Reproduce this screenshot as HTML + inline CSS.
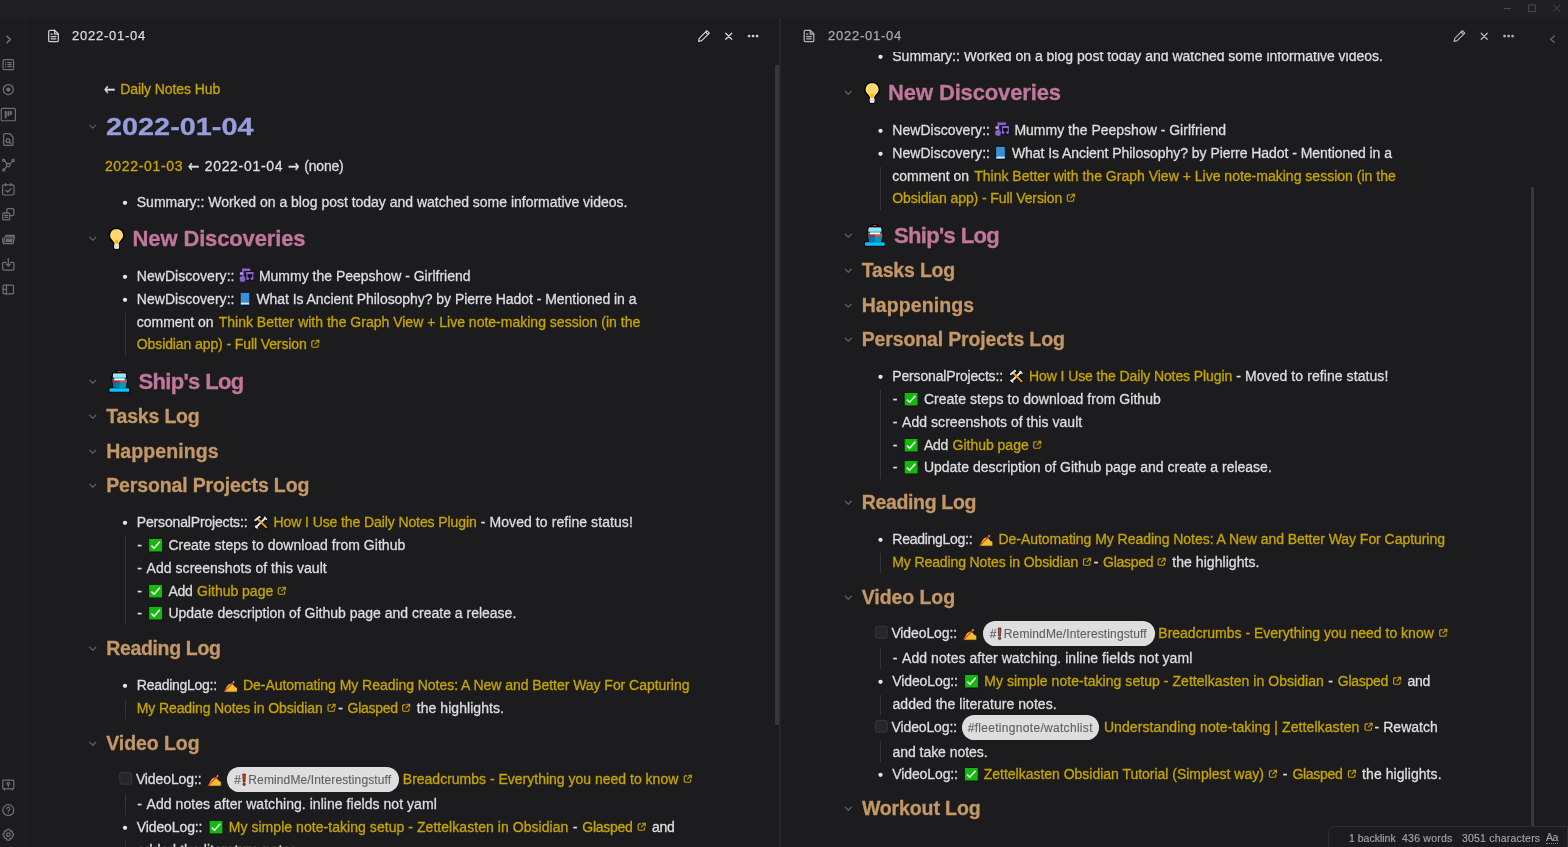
<!DOCTYPE html>
<html lang="en"><head><meta charset="utf-8"><title>2022-01-04 - Obsidian</title>
<style>
html,body{margin:0;padding:0}
body{width:1568px;height:847px;overflow:hidden;background:#1c1c1f;position:relative;font-family:"Liberation Sans", sans-serif;font-size:14px;color:#dedede}
.ln{margin:0;padding:0;font-size:14px;font-weight:400}
.t{position:absolute;white-space:pre;line-height:16px;-webkit-text-stroke:.3px}
.bul{position:absolute;width:4.200px;height:4.200px;border-radius:50%;background:#e4e4e4}
.gd{position:absolute;width:1px;background:#323237}
.pill{position:absolute;height:24.600px;border-radius:12.300px;background:#dedede}
.clip{position:absolute;top:52px;height:795px;overflow:hidden}
.clip>.in{position:absolute;left:0;top:-52px;will-change:transform}
#titlebar{position:absolute;left:0;top:0;width:1568px;height:18px;background:#202024}
.hd{position:absolute;font-size:13px;line-height:20px;white-space:pre;will-change:transform;-webkit-text-stroke:.25px}
#status{position:absolute;left:1328px;top:826px;width:240px;height:22px;box-sizing:border-box;border:1px solid #2c2c31;border-radius:6px 0 0 0;background:#1c1c1f;font-size:10.500px;color:#a4a4a8}
#status span{position:absolute;top:5px;line-height:12px;white-space:pre;will-change:transform;-webkit-text-stroke:.15px}
</style></head>
<body>
<div id="titlebar">
<svg style="position:absolute;left:1503px;top:4px" width="58" height="9" viewBox="0 0 58 9" fill="none" stroke="#4b4b52" stroke-width="1"><path d="M1 4.500h7"/><rect x="25.800" y="1" width="6.600" height="6.600"/><path d="M50.400 1l6.600 6.600M57 1l-6.600 6.600"/></svg>
</div>
<div id="ribbon" style="position:absolute;left:0;top:18px;width:24.500px;height:829px;border-right:1px solid #232327"></div>
<svg style="position:absolute;left:2px;top:34px" width="12" height="11" viewBox="0 0 12 11" ><g transform="translate(0.80 0.00) scale(0.4583 0.4583) translate(-0.00 -0.00)"><g fill="none" stroke="#7a7a80" stroke-width="3.05" stroke-linecap="round" stroke-linejoin="round"><path d="M9 5l7.5 7L9 19"/></g></g></svg><svg style="position:absolute;left:2px;top:58px" width="13" height="13" viewBox="0 0 13 13" ><g transform="translate(0.30 0.70) scale(0.5000 0.5000) translate(-0.00 -0.00)"><g fill="none" stroke="#6f6f75" stroke-width="2.50" stroke-linecap="round" stroke-linejoin="round"><rect x="1.500" y="2" width="21" height="20" rx="2.500"/><path d="M6.500 8h.1M6.500 12h.1M6.500 16h.1M11 8h7M11 12h7M11 16h7"/></g></g></svg><svg style="position:absolute;left:2px;top:83px" width="13" height="13" viewBox="0 0 13 13" ><g transform="translate(0.30 0.60) scale(0.5000 0.5000) translate(-0.00 -0.00)"><g fill="none" stroke="#6f6f75" stroke-width="2.50" stroke-linecap="round" stroke-linejoin="round"><circle cx="12" cy="12" r="10"/><circle cx="12" cy="12" r="4.2" fill="#6f6f75" stroke="none"/></g></g></svg><svg style="position:absolute;left:0px;top:106px" width="17" height="17" viewBox="0 0 17 17" ><g transform="translate(0.55 0.85) scale(0.6458 0.6458) translate(-0.00 -0.00)"><g fill="none" stroke="#6f6f75" stroke-width="1.86" stroke-linecap="round" stroke-linejoin="round"><rect x="1" y="2.500" width="22" height="19" rx="2"/><path d="M8 7.500v9M12.200 7.500v5.500M16 7.500v4" stroke-width="3"/></g></g></svg><svg style="position:absolute;left:0px;top:132px" width="16" height="15" viewBox="0 0 16 15" ><g transform="translate(0.80 0.00) scale(0.6250 0.6250) translate(-0.00 -0.00)"><g fill="none" stroke="#6f6f75" stroke-width="2.00" stroke-linecap="round" stroke-linejoin="round"><path d="M14 2.500H6.500a2 2 0 0 0-2 2v15a2 2 0 0 0 2 2h11a2 2 0 0 0 2-2V8z"/><circle cx="11.500" cy="14" r="3"/><path d="M13.800 16.300l2.200 2.200"/></g></g></svg><svg style="position:absolute;left:1px;top:157px" width="15" height="15" viewBox="0 0 15 15" ><g transform="translate(0.00 0.20) scale(0.6083 0.6083) translate(-0.00 -0.00)"><g fill="none" stroke="#6f6f75" stroke-width="2.05" stroke-linecap="round" stroke-linejoin="round"><circle cx="12" cy="13" r="3"/><circle cx="4.500" cy="5" r="1.800"/><circle cx="20" cy="5.500" r="1.800"/><circle cx="4.500" cy="21" r="1.800"/><path d="M9.800 10.800L5.800 6.400M14.400 11L18.800 6.800M9.800 15.200L5.700 19.700"/></g></g></svg><svg style="position:absolute;left:1px;top:182px" width="15" height="15" viewBox="0 0 15 15" ><g transform="translate(0.10 0.10) scale(0.6000 0.6000) translate(-0.00 -0.00)"><g fill="none" stroke="#6f6f75" stroke-width="2.08" stroke-linecap="round" stroke-linejoin="round"><rect x="2.500" y="4.500" width="19" height="17" rx="2"/><path d="M7.500 2v4M16.500 2v4M8 13.500l3 3 5.500-5.500"/></g></g></svg><svg style="position:absolute;left:1px;top:207px" width="14" height="15" viewBox="0 0 14 15" ><g transform="translate(0.60 0.60) scale(0.5583 0.5583) translate(-0.00 -0.00)"><g fill="none" stroke="#6f6f75" stroke-width="2.24" stroke-linecap="round" stroke-linejoin="round"><rect x="9.500" y="2" width="12.500" height="12.500" rx="2"/><rect x="2" y="9.500" width="12.500" height="12.500" rx="2" fill="#1c1c1f"/><path d="M5.500 14h5.500M5.500 17.500h5.500"/></g></g></svg><svg style="position:absolute;left:1px;top:232px" width="15" height="15" viewBox="0 0 15 15" ><g transform="translate(0.85 0.75) scale(0.5625 0.5625) translate(-0.00 -0.00)"><g fill="none" stroke="#6f6f75" stroke-width="2.22" stroke-linecap="round" stroke-linejoin="round"><path d="M7 4.500h15l-1 3"/><path d="M5.500 7.500h17l-2.500 12H3z"/><path d="M8.500 11.500h10l-1 4.500h-10z" fill="#6f6f75"/><path d="M1.500 9v8"/></g></g></svg><svg style="position:absolute;left:1px;top:257px" width="15" height="15" viewBox="0 0 15 15" ><g transform="translate(0.20 0.10) scale(0.5917 0.5917) translate(-0.00 -0.00)"><g fill="none" stroke="#6f6f75" stroke-width="2.11" stroke-linecap="round" stroke-linejoin="round"><path d="M12 2v13M8.500 11.500L12 15l3.500-3.500"/><path d="M8 9H4.500a2 2 0 0 0-2 2v9a2 2 0 0 0 2 2h15a2 2 0 0 0 2-2v-9a2 2 0 0 0-2-2H16"/></g></g></svg><svg style="position:absolute;left:2px;top:283px" width="13" height="13" viewBox="0 0 13 13" ><g transform="translate(0.05 0.25) scale(0.5208 0.5208) translate(-0.00 -0.00)"><g fill="none" stroke="#6f6f75" stroke-width="2.40" stroke-linecap="round" stroke-linejoin="round"><rect x="2" y="3.500" width="20" height="17" rx="2"/><path d="M8.500 3.500v17M2 12h6.500"/></g></g></svg><svg style="position:absolute;left:2px;top:778px" width="13" height="14" viewBox="0 0 13 14" ><g transform="translate(0.05 0.55) scale(0.5208 0.5208) translate(-0.00 -0.00)"><g fill="none" stroke="#6f6f75" stroke-width="2.40" stroke-linecap="round" stroke-linejoin="round"><rect x="1.500" y="3" width="21" height="17" rx="1.500"/><circle cx="12" cy="9.500" r="2.300"/><path d="M12 12v4M4.500 20v2M19.500 20v2"/></g></g></svg><svg style="position:absolute;left:2px;top:803px" width="13" height="14" viewBox="0 0 13 14" ><g transform="translate(0.05 0.95) scale(0.5208 0.5208) translate(-0.00 -0.00)"><g fill="none" stroke="#6f6f75" stroke-width="2.40" stroke-linecap="round" stroke-linejoin="round"><circle cx="12" cy="12" r="10.500"/><path d="M9 9.300a3 3 0 1 1 4.300 2.700c-.9.500-1.300 1-1.300 2.200M12 17.600h.01"/></g></g></svg><svg style="position:absolute;left:1px;top:828px" width="14" height="14" viewBox="0 0 14 14" ><g transform="translate(0.80 0.20) scale(0.5417 0.5417) translate(-0.00 -0.00)"><g fill="none" stroke="#6f6f75" stroke-width="2.31" stroke-linecap="round" stroke-linejoin="round"><circle cx="12" cy="12" r="3.300"/><path d="M12 1.500l2.400 1 .8 2.600 2.500-.4 1.800 1.800-.4 2.500 2.400 1.400v3.200l-2.400 1.400.4 2.500-1.800 1.800-2.500-.4-.8 2.600-2.400 1-2.400-1-.8-2.600-2.500.4-1.800-1.800.4-2.500L2.500 13.600v-3.200l2.400-1.400-.4-2.500 1.800-1.800 2.500.4.800-2.600z"/></g></g></svg>
<div id="lhead"><svg style="position:absolute;left:47px;top:29px" width="13" height="14" viewBox="0 0 13 14" ><g transform="translate(0.80 0.50) scale(1.0000 1.0000) translate(-0.00 -0.00)"><g fill="none" stroke="#d0d0d0" stroke-width="1.25" stroke-linejoin="round" stroke-linecap="round"><path d="M6.800 .800H2.200A1.300 1.300 0 0 0 .900 2.100v8.800a1.300 1.300 0 0 0 1.300 1.300h7a1.300 1.300 0 0 0 1.300-1.300V4.500z"/><path d="M6.800 .800v3.700h3.700"/><path d="M3.300 7h4.800M3.300 9.300h4.800M3.300 4.700h1.200"/></g></g></svg><svg style="position:absolute;left:697px;top:29px" width="14" height="14" viewBox="0 0 14 14" ><g transform="translate(0.60 0.40) scale(1.0000 1.0000) translate(-0.00 -0.00)"><g fill="none" stroke="#d0d0d0" stroke-width="1.2" stroke-linejoin="round" stroke-linecap="round"><path d="M9.300 1.300l2.400 2.400-7.600 7.600-3.100.700.700-3.100z"/><path d="M8 2.600l2.400 2.400"/></g></g></svg><svg style="position:absolute;left:724px;top:32px" width="9" height="9" viewBox="0 0 9 9" ><g transform="translate(0.70 0.20) scale(1.0000 1.0000) translate(-0.00 -0.00)"><g fill="none" stroke="#d0d0d0" stroke-width="1.35" stroke-linejoin="round" stroke-linecap="round"><path d="M1 1L7 7M7 1L1 7"/></g></g></svg><svg style="position:absolute;left:747px;top:34px" width="12" height="4" viewBox="0 0 12 4" ><g transform="translate(0.60 0.60) scale(1.0000 1.0000) translate(-0.00 -0.00)"><circle cx="1.5" cy="1.5" r="1.4" fill="#d0d0d0"/><circle cx="5.5" cy="1.5" r="1.4" fill="#d0d0d0"/><circle cx="9.5" cy="1.5" r="1.4" fill="#d0d0d0"/></g></svg><span class="hd" style="left:72.300px;top:25.800px;color:#dcdcdc;letter-spacing:0.750px">2022-01-04</span></div>
<div id="rhead"><svg style="position:absolute;left:803px;top:29px" width="12" height="14" viewBox="0 0 12 14" ><g transform="translate(0.30 0.50) scale(1.0000 1.0000) translate(-0.00 -0.00)"><g fill="none" stroke="#b4b4b8" stroke-width="1.25" stroke-linejoin="round" stroke-linecap="round"><path d="M6.800 .800H2.200A1.300 1.300 0 0 0 .900 2.100v8.800a1.300 1.300 0 0 0 1.300 1.300h7a1.300 1.300 0 0 0 1.300-1.300V4.500z"/><path d="M6.800 .800v3.700h3.700"/><path d="M3.300 7h4.800M3.300 9.300h4.800M3.300 4.700h1.200"/></g></g></svg><svg style="position:absolute;left:1453px;top:29px" width="14" height="14" viewBox="0 0 14 14" ><g transform="translate(0.10 0.40) scale(1.0000 1.0000) translate(-0.00 -0.00)"><g fill="none" stroke="#b4b4b8" stroke-width="1.2" stroke-linejoin="round" stroke-linecap="round"><path d="M9.300 1.300l2.400 2.400-7.600 7.600-3.100.700.700-3.100z"/><path d="M8 2.600l2.400 2.400"/></g></g></svg><svg style="position:absolute;left:1480px;top:32px" width="9" height="9" viewBox="0 0 9 9" ><g transform="translate(0.20 0.20) scale(1.0000 1.0000) translate(-0.00 -0.00)"><g fill="none" stroke="#b4b4b8" stroke-width="1.35" stroke-linejoin="round" stroke-linecap="round"><path d="M1 1L7 7M7 1L1 7"/></g></g></svg><svg style="position:absolute;left:1503px;top:34px" width="12" height="4" viewBox="0 0 12 4" ><g transform="translate(0.10 0.60) scale(1.0000 1.0000) translate(-0.00 -0.00)"><circle cx="1.5" cy="1.5" r="1.4" fill="#b4b4b8"/><circle cx="5.5" cy="1.5" r="1.4" fill="#b4b4b8"/><circle cx="9.5" cy="1.5" r="1.4" fill="#b4b4b8"/></g></svg><span class="hd" style="left:827.80px;top:25.800px;color:#a9a9ad;letter-spacing:0.750px">2022-01-04</span></div>
<div class="clip" style="left:25px;width:755px"><div class="in" style="left:-25px">
<div class="ln"><span class="t" style='left:104.30px;top:79px;line-height:20px;font-family:"DejaVu Sans", sans-serif;font-size:17px;transform:scaleX(.8);transform-origin:0 0;'>←</span><span class="t" style="left:120.30px;top:81px;color:#c6a500;letter-spacing:-0.084px;">Daily Notes Hub</span></div>
<h1 class="ln"><svg style="position:absolute;left:88px;top:123px" width="9" height="7" viewBox="0 0 9 7" ><g transform="translate(0.80 0.90) scale(1.0000 1.0000) translate(-0.00 -0.00)"><path d="M1 1.2l3 3 3-3" fill="none" stroke="#5a5a60" stroke-width="1.3" stroke-linecap="round" stroke-linejoin="round"/></g></svg><span class="t" style="left:106.20px;top:113px;line-height:27px;color:#969ddd;font-size:24px;font-weight:700;transform:scaleX(1.2015);transform-origin:0 0;">2022-01-04</span></h1>
<div class="ln"><span class="t" style="left:104.90px;top:158px;color:#c6a500;letter-spacing:0.678px;">2022-01-03</span><span class="t" style='left:188.40px;top:156px;line-height:20px;font-family:"DejaVu Sans", sans-serif;font-size:17px;transform:scaleX(.8);transform-origin:0 0;'>←</span><span class="t" style="left:204.70px;top:158px;letter-spacing:0.688px;">2022-01-04</span><span class="t" style='left:287.90px;top:156px;line-height:20px;font-family:"DejaVu Sans", sans-serif;font-size:17px;transform:scaleX(.8);transform-origin:0 0;'>→</span><span class="t" style="left:304.20px;top:158px;letter-spacing:-0.178px;">(none)</span></div>
<div class="ln"><svg style="position:absolute;left:122px;top:200px" width="6" height="6" viewBox="0 0 6 6" ><g transform="translate(0.70 0.50) scale(1.0000 1.0000) translate(-0.00 -0.00)"><circle cx="2.3" cy="2.3" r="2.15" fill="#e6e6e6"/></g></svg><span class="t" style="left:136.80px;top:194px;letter-spacing:-0.013px;">Summary:: Worked on a blog post today and watched some informative videos.</span></div>
<h2 class="ln"><svg style="position:absolute;left:88px;top:236px" width="9" height="6" viewBox="0 0 9 6" ><g transform="translate(0.80 0.10) scale(1.0000 1.0000) translate(-0.00 -0.00)"><path d="M1 1.2l3 3 3-3" fill="none" stroke="#5a5a60" stroke-width="1.3" stroke-linecap="round" stroke-linejoin="round"/></g></svg><svg style="position:absolute;left:108px;top:227px" width="18" height="24" viewBox="0 0 18 24" role="img" aria-label="💡"><g transform="translate(0.10 0.00) scale(1.0353 1.0348) translate(-0.00 -0.00)"><path d="M8.2 1.3a6.9 6.9 0 0 0-4 12.5c1 .9 1.4 1.9 1.5 3.2v3.2a1.4 1.4 0 0 0 1.4 1.4h2.2a1.4 1.4 0 0 0 1.4-1.4V17c.1-1.3.5-2.3 1.5-3.2a6.9 6.9 0 0 0-4-12.5z" fill="#ffd872" stroke="#000" stroke-width="1.3"/><path d="M6.3 12.3h3.8l-.5 4H6.8z" fill="#fdb800"/><rect x="5.9" y="16.4" width="4.7" height="4.6" rx="1" fill="#e9e9e9"/><rect x="5.9" y="18" width="4.7" height=".7" fill="#cfcfcf"/></g></svg><span class="t" style="left:132.60px;top:226px;line-height:25px;color:#c0779a;font-size:22px;font-weight:700;letter-spacing:-0.138px;">New Discoveries</span></h2>
<div class="ln"><svg style="position:absolute;left:122px;top:274px" width="6" height="6" viewBox="0 0 6 6" ><g transform="translate(0.70 0.50) scale(1.0000 1.0000) translate(-0.00 -0.00)"><circle cx="2.3" cy="2.3" r="2.15" fill="#e6e6e6"/></g></svg><span class="t" style="left:136.80px;top:268px;letter-spacing:0.032px;">NewDiscovery::</span><svg style="position:absolute;left:239px;top:268px" width="15" height="15" viewBox="0 0 15 15" role="img" aria-label="🎶"><g transform="translate(0.50 0.00) scale(1.0000 1.0000) translate(-0.00 -0.00)"><g stroke="#0b0b0d" stroke-width="1.4" stroke-linejoin="round" fill="#0b0b0d"><rect x="6.9" y="4" width="7" height="6.6"/><circle cx="8.1" cy="10.5" r="1.5"/><circle cx="12.5" cy="10.5" r="1.5"/></g><g fill="#8762cb"><rect x="2.7" y=".5" width="8.1" height="2.5"/><rect x="2.7" y=".5" width="1.5" height="10.5"/><circle cx="3" cy="10.9" r="2.9"/><rect x="6.9" y="4" width="7" height="2.1"/><rect x="6.9" y="4" width="1.2" height="6.3"/><rect x="12.7" y="4" width="1.2" height="6.3"/><circle cx="8.1" cy="10.5" r="1.5"/><circle cx="12.5" cy="10.5" r="1.5"/></g><circle cx="1.9" cy="5.5" r="1.6" fill="#b59bee"/></g></svg><span class="t" style="left:258.90px;top:268px;">Mummy the Peepshow - Girlfriend</span></div>
<div class="ln"><svg style="position:absolute;left:122px;top:297px" width="6" height="6" viewBox="0 0 6 6" ><g transform="translate(0.70 0.50) scale(1.0000 1.0000) translate(-0.00 -0.00)"><circle cx="2.3" cy="2.3" r="2.15" fill="#e6e6e6"/></g></svg><span class="t" style="left:136.80px;top:291px;letter-spacing:0.032px;">NewDiscovery::</span><svg style="position:absolute;left:239px;top:291px" width="13" height="16" viewBox="0 0 13 16" role="img" aria-label="📘"><g transform="translate(0.70 0.80) scale(1.0000 1.0000) translate(-0.00 -0.00)"><rect x=".45" y=".5" width="9.7" height="13.2" rx="1.2" fill="#3a8fd0" stroke="#0a0a0c" stroke-width=".9"/><rect x="1.2" y="10.9" width="8.2" height="1.5" fill="#dfe9f2"/></g></svg><span class="t" style="left:256.40px;top:291px;letter-spacing:-0.048px;">What Is Ancient Philosophy? by Pierre Hadot - Mentioned in a</span></div>
<div class="ln"><span class="t" style="left:136.80px;top:314px;letter-spacing:-0.035px;">comment on</span><span class="t" style="left:218.70px;top:314px;color:#c6a500;letter-spacing:0.006px;">Think Better with the Graph View + Live note-making session (in the</span></div>
<div class="ln"><span class="t" style="left:136.80px;top:336px;color:#c6a500;letter-spacing:-0.102px;">Obsidian app) - Full Version</span><svg style="position:absolute;left:311px;top:339px" width="9" height="10" viewBox="0 0 9 10" ><g transform="translate(0.00 0.60) scale(0.9239 0.9239) translate(-0.00 -0.00)"><g fill="none" stroke="#c6a500" stroke-width="1.2" stroke-linecap="round" stroke-linejoin="round"><path d="M3.6 1.4H1.9a1 1 0 0 0-1 1v4.9a1 1 0 0 0 1 1h4.9a1 1 0 0 0 1-1V5.6"/><path d="M5.6 0.7H8.5V3.6"/><path d="M8.3 0.9L4.4 4.8"/></g></g></svg></div>
<h2 class="ln"><svg style="position:absolute;left:88px;top:379px" width="9" height="6" viewBox="0 0 9 6" ><g transform="translate(0.80 0.10) scale(1.0000 1.0000) translate(-0.00 -0.00)"><path d="M1 1.2l3 3 3-3" fill="none" stroke="#5a5a60" stroke-width="1.3" stroke-linecap="round" stroke-linejoin="round"/></g></svg><svg style="position:absolute;left:108px;top:369px" width="23" height="24" viewBox="0 0 23 24" role="img" aria-label="🚢"><g transform="translate(0.30 0.40) scale(1.0000 1.0000) translate(-0.00 -0.00)"><g stroke="#000" stroke-width="1.2" stroke-linejoin="round"><rect x="8.4" y="1.2" width="5" height="2.2" fill="#e2557a"/><path d="M4.5 3.6h13.2l.8 5.2H3.7z" fill="#fff"/><path d="M3.2 8.6h16.2l-2 10H5.2z" fill="#0a8fb8"/><rect x=".8" y="18.6" width="20.4" height="4" fill="#05c4ff"/></g><rect x="5" y="4.8" width="12.4" height="3.6" fill="#7fe9ff"/><rect x="6" y="8.9" width="10.4" height="2.2" fill="#f4f4f4"/><rect x="3.9" y="11.3" width="7.4" height="2" fill="#d1122f"/><rect x="11.3" y="11.3" width="7.4" height="2" fill="#e0522a"/><path d="M4.3 13.3h7v5.2H5.3z" fill="#0078a4"/><path d="M11.3 13.3h7l-1 5.2h-6z" fill="#0099c2"/><rect x="1.3" y="19.1" width="19.4" height="3" fill="#05c4ff"/></g></svg><span class="t" style="left:138.40px;top:369px;line-height:25px;color:#c0779a;font-size:22px;font-weight:700;letter-spacing:-0.636px;">Ship&#x27;s Log</span></h2>
<h3 class="ln"><svg style="position:absolute;left:88px;top:414px" width="9" height="6" viewBox="0 0 9 6" ><g transform="translate(0.80 0.10) scale(1.0000 1.0000) translate(-0.00 -0.00)"><path d="M1 1.2l3 3 3-3" fill="none" stroke="#5a5a60" stroke-width="1.3" stroke-linecap="round" stroke-linejoin="round"/></g></svg><span class="t" style="left:106.20px;top:405px;line-height:22px;color:#c49866;font-size:19.5px;font-weight:700;letter-spacing:-0.178px;">Tasks Log</span></h3>
<h3 class="ln"><svg style="position:absolute;left:88px;top:449px" width="9" height="6" viewBox="0 0 9 6" ><g transform="translate(0.80 0.10) scale(1.0000 1.0000) translate(-0.00 -0.00)"><path d="M1 1.2l3 3 3-3" fill="none" stroke="#5a5a60" stroke-width="1.3" stroke-linecap="round" stroke-linejoin="round"/></g></svg><span class="t" style="left:106.20px;top:440px;line-height:22px;color:#c49866;font-size:19.5px;font-weight:700;letter-spacing:0.091px;">Happenings</span></h3>
<h3 class="ln"><svg style="position:absolute;left:88px;top:483px" width="9" height="6" viewBox="0 0 9 6" ><g transform="translate(0.80 0.10) scale(1.0000 1.0000) translate(-0.00 -0.00)"><path d="M1 1.2l3 3 3-3" fill="none" stroke="#5a5a60" stroke-width="1.3" stroke-linecap="round" stroke-linejoin="round"/></g></svg><span class="t" style="left:106.20px;top:474px;line-height:22px;color:#c49866;font-size:19.5px;font-weight:700;letter-spacing:-0.138px;">Personal Projects Log</span></h3>
<div class="ln"><svg style="position:absolute;left:122px;top:520px" width="6" height="6" viewBox="0 0 6 6" ><g transform="translate(0.70 0.50) scale(1.0000 1.0000) translate(-0.00 -0.00)"><circle cx="2.3" cy="2.3" r="2.15" fill="#e6e6e6"/></g></svg><span class="t" style="left:136.80px;top:514px;letter-spacing:-0.167px;">PersonalProjects::</span><svg style="position:absolute;left:254px;top:515px" width="14" height="15" viewBox="0 0 14 15" role="img" aria-label="🛠"><g transform="translate(0.00 0.20) scale(1.0000 1.0000) translate(-0.00 -0.00)"><g stroke-linecap="round"><path d="M2.2 11.8L11.2 3" stroke="#000" stroke-width="3.6"/><path d="M3.6 3.6L12.2 12.2" stroke="#000" stroke-width="3.6"/><path d="M1.2 5.2L5.6 1.4" stroke="#000" stroke-width="3.6"/><path d="M2.2 11.8L11.2 3" stroke="#e8e8e8" stroke-width="2"/><path d="M1.6 11.2l1.6 1.6M10.6 2.2l1.8 1.8" stroke="#e8e8e8" stroke-width="1.6"/><path d="M4 4L12.2 12.2" stroke="#e8a200" stroke-width="2"/><path d="M1.4 5L5.6 1.6" stroke="#d9d9d9" stroke-width="2.2"/></g></g></svg><span class="t" style="left:273.60px;top:514px;color:#c6a500;letter-spacing:-0.100px;">How I Use the Daily Notes Plugin</span><span class="t" style="left:480.80px;top:514px;letter-spacing:0.076px;">- Moved to refine status!</span></div>
<div class="ln"><span class="t" style="left:137.20px;top:537px;letter-spacing:0.328px;">-</span><svg style="position:absolute;left:148px;top:538px" width="16" height="15" viewBox="0 0 16 15" role="img" aria-label="✅"><g transform="translate(0.20 0.00) scale(1.0000 1.0000) translate(-0.00 -0.00)"><rect x=".45" y=".45" width="13.9" height="13.5" rx=".8" fill="#16b810" stroke="#0a0d0a" stroke-width=".9"/><path d="M3.2 7.6l2.7 2.6 5.7-6.4" fill="none" stroke="#f4fff4" stroke-width="1.55"/></g></svg><span class="t" style="left:168.40px;top:537px;letter-spacing:0.031px;">Create steps to download from Github</span></div>
<div class="ln"><span class="t" style="left:137.20px;top:560px;letter-spacing:0.328px;">-</span><span class="t" style="left:146.60px;top:560px;letter-spacing:0.041px;">Add screenshots of this vault</span></div>
<div class="ln"><span class="t" style="left:137.20px;top:583px;letter-spacing:0.328px;">-</span><svg style="position:absolute;left:148px;top:584px" width="16" height="15" viewBox="0 0 16 15" role="img" aria-label="✅"><g transform="translate(0.20 0.00) scale(1.0000 1.0000) translate(-0.00 -0.00)"><rect x=".45" y=".45" width="13.9" height="13.5" rx=".8" fill="#16b810" stroke="#0a0d0a" stroke-width=".9"/><path d="M3.2 7.6l2.7 2.6 5.7-6.4" fill="none" stroke="#f4fff4" stroke-width="1.55"/></g></svg><span class="t" style="left:168.40px;top:583px;letter-spacing:-0.274px;">Add</span><span class="t" style="left:197.10px;top:583px;color:#c6a500;letter-spacing:-0.018px;">Github page</span><svg style="position:absolute;left:277px;top:586px" width="9" height="10" viewBox="0 0 9 10" ><g transform="translate(0.40 0.60) scale(0.9239 0.9239) translate(-0.00 -0.00)"><g fill="none" stroke="#c6a500" stroke-width="1.2" stroke-linecap="round" stroke-linejoin="round"><path d="M3.6 1.4H1.9a1 1 0 0 0-1 1v4.9a1 1 0 0 0 1 1h4.9a1 1 0 0 0 1-1V5.6"/><path d="M5.6 0.7H8.5V3.6"/><path d="M8.3 0.9L4.4 4.8"/></g></g></svg></div>
<div class="ln"><span class="t" style="left:137.20px;top:605px;letter-spacing:0.328px;">-</span><svg style="position:absolute;left:148px;top:606px" width="16" height="15" viewBox="0 0 16 15" role="img" aria-label="✅"><g transform="translate(0.20 0.00) scale(1.0000 1.0000) translate(-0.00 -0.00)"><rect x=".45" y=".45" width="13.9" height="13.5" rx=".8" fill="#16b810" stroke="#0a0d0a" stroke-width=".9"/><path d="M3.2 7.6l2.7 2.6 5.7-6.4" fill="none" stroke="#f4fff4" stroke-width="1.55"/></g></svg><span class="t" style="left:168.40px;top:605px;">Update description of Github page and create a release.</span></div>
<h3 class="ln"><svg style="position:absolute;left:88px;top:646px" width="9" height="6" viewBox="0 0 9 6" ><g transform="translate(0.80 0.10) scale(1.0000 1.0000) translate(-0.00 -0.00)"><path d="M1 1.2l3 3 3-3" fill="none" stroke="#5a5a60" stroke-width="1.3" stroke-linecap="round" stroke-linejoin="round"/></g></svg><span class="t" style="left:106.20px;top:637px;line-height:22px;color:#c49866;font-size:19.5px;font-weight:700;letter-spacing:-0.334px;">Reading Log</span></h3>
<div class="ln"><svg style="position:absolute;left:122px;top:683px" width="6" height="6" viewBox="0 0 6 6" ><g transform="translate(0.70 0.50) scale(1.0000 1.0000) translate(-0.00 -0.00)"><circle cx="2.3" cy="2.3" r="2.15" fill="#e6e6e6"/></g></svg><span class="t" style="left:136.80px;top:677px;letter-spacing:-0.275px;">ReadingLog::</span><svg style="position:absolute;left:223px;top:679px" width="15" height="14" viewBox="0 0 15 14" role="img" aria-label="✍"><g transform="translate(0.60 0.90) scale(1.0000 1.0000) translate(-0.00 -0.00)"><path d="M.9 11.2C1.3 9.2 2.6 6.4 4.4 4.6C5.4 3.7 6.9 3.2 7.9 3.4C8.9 3.6 9.5 4.2 10 4.9L11.5 6.7C12 7.1 12.8 7.3 13.8 7.4V12.3H1.5z" fill="#f4bd31" stroke="#0a0a0c" stroke-width=".8" stroke-linejoin="round"/><path d="M.7 11.7L10.3 1.8" stroke="#e5431a" stroke-width="1.35"/><path d="M9.7 2.4l.9-.9" stroke="#d8d8d8" stroke-width="1.35"/></g></svg><span class="t" style="left:243.00px;top:677px;color:#c6a500;letter-spacing:-0.043px;">De-Automating My Reading Notes: A New and Better Way For Capturing</span></div>
<div class="ln"><span class="t" style="left:136.80px;top:700px;color:#c6a500;letter-spacing:-0.118px;">My Reading Notes in Obsidian</span><svg style="position:absolute;left:327px;top:703px" width="9" height="10" viewBox="0 0 9 10" ><g transform="translate(0.20 0.60) scale(0.9239 0.9239) translate(-0.00 -0.00)"><g fill="none" stroke="#c6a500" stroke-width="1.2" stroke-linecap="round" stroke-linejoin="round"><path d="M3.6 1.4H1.9a1 1 0 0 0-1 1v4.9a1 1 0 0 0 1 1h4.9a1 1 0 0 0 1-1V5.6"/><path d="M5.6 0.7H8.5V3.6"/><path d="M8.3 0.9L4.4 4.8"/></g></g></svg><span class="t" style="left:338.30px;top:700px;letter-spacing:0.328px;">-</span><span class="t" style="left:347.50px;top:700px;color:#c6a500;letter-spacing:-0.251px;">Glasped</span><svg style="position:absolute;left:401px;top:703px" width="10" height="10" viewBox="0 0 10 10" ><g transform="translate(0.80 0.60) scale(0.9239 0.9239) translate(-0.00 -0.00)"><g fill="none" stroke="#c6a500" stroke-width="1.2" stroke-linecap="round" stroke-linejoin="round"><path d="M3.6 1.4H1.9a1 1 0 0 0-1 1v4.9a1 1 0 0 0 1 1h4.9a1 1 0 0 0 1-1V5.6"/><path d="M5.6 0.7H8.5V3.6"/><path d="M8.3 0.9L4.4 4.8"/></g></g></svg><span class="t" style="left:416.70px;top:700px;letter-spacing:0.060px;">the highlights.</span></div>
<h3 class="ln"><svg style="position:absolute;left:88px;top:741px" width="9" height="6" viewBox="0 0 9 6" ><g transform="translate(0.80 0.10) scale(1.0000 1.0000) translate(-0.00 -0.00)"><path d="M1 1.2l3 3 3-3" fill="none" stroke="#5a5a60" stroke-width="1.3" stroke-linecap="round" stroke-linejoin="round"/></g></svg><span class="t" style="left:106.20px;top:732px;line-height:22px;color:#c49866;font-size:19.5px;font-weight:700;letter-spacing:-0.056px;">Video Log</span></h3>
<div class="ln"><svg style="position:absolute;left:119px;top:771px" width="14" height="14" viewBox="0 0 14 14" ><g transform="translate(0.30 0.80) scale(1.0000 1.0000) translate(-0.00 -0.00)"><rect x=".5" y=".5" width="11.9" height="11.9" rx="2.4" fill="#26262b" stroke="#38383e" stroke-width="1"/></g></svg><span class="t" style="left:135.90px;top:771px;letter-spacing:-0.110px;">VideoLog::</span><svg style="position:absolute;left:207px;top:773px" width="15" height="14" viewBox="0 0 15 14" role="img" aria-label="✍"><g transform="translate(0.50 0.90) scale(1.0000 1.0000) translate(-0.00 -0.00)"><path d="M.9 11.2C1.3 9.2 2.6 6.4 4.4 4.6C5.4 3.7 6.9 3.2 7.9 3.4C8.9 3.6 9.5 4.2 10 4.9L11.5 6.7C12 7.1 12.8 7.3 13.8 7.4V12.3H1.5z" fill="#f4bd31" stroke="#0a0a0c" stroke-width=".8" stroke-linejoin="round"/><path d="M.7 11.7L10.3 1.8" stroke="#e5431a" stroke-width="1.35"/><path d="M9.7 2.4l.9-.9" stroke="#d8d8d8" stroke-width="1.35"/></g></svg><span class="pill" style="left:227.00px;top:767.40px;width:172.00px"></span><span class="t" style="left:234.30px;top:773px;line-height:14px;color:#5f5f5f;font-size:12px;-webkit-text-stroke:.12px;letter-spacing:-0.388px;">#</span><svg style="position:absolute;left:241px;top:773px" width="6" height="14" viewBox="0 0 6 14" role="img" aria-label="❗"><g transform="translate(0.80 0.00) scale(1.0000 1.0000) translate(-0.00 -0.00)"><path d="M.9 1h2.8l-.5 8H1.4z" fill="#e8400f" stroke="#111" stroke-width=".6"/><circle cx="2.3" cy="11.3" r="1.3" fill="#e8400f" stroke="#111" stroke-width=".6"/></g></svg><span class="t" style="left:248.30px;top:773px;line-height:14px;color:#5f5f5f;font-size:12px;-webkit-text-stroke:.12px;letter-spacing:0.126px;">RemindMe/Interestingstuff</span><span class="t" style="left:402.80px;top:771px;color:#c6a500;">Breadcrumbs - Everything you need to know</span><svg style="position:absolute;left:683px;top:774px" width="9" height="10" viewBox="0 0 9 10" ><g transform="translate(0.40 0.60) scale(0.9239 0.9239) translate(-0.00 -0.00)"><g fill="none" stroke="#c6a500" stroke-width="1.2" stroke-linecap="round" stroke-linejoin="round"><path d="M3.6 1.4H1.9a1 1 0 0 0-1 1v4.9a1 1 0 0 0 1 1h4.9a1 1 0 0 0 1-1V5.6"/><path d="M5.6 0.7H8.5V3.6"/><path d="M8.3 0.9L4.4 4.8"/></g></g></svg></div>
<div class="ln"><span class="t" style="left:137.20px;top:796px;letter-spacing:0.328px;">-</span><span class="t" style="left:146.60px;top:796px;letter-spacing:0.047px;">Add notes after watching. inline fields not yaml</span></div>
<div class="ln"><svg style="position:absolute;left:122px;top:825px" width="6" height="6" viewBox="0 0 6 6" ><g transform="translate(0.70 0.50) scale(1.0000 1.0000) translate(-0.00 -0.00)"><circle cx="2.3" cy="2.3" r="2.15" fill="#e6e6e6"/></g></svg><span class="t" style="left:136.80px;top:819px;letter-spacing:-0.110px;">VideoLog::</span><svg style="position:absolute;left:208px;top:820px" width="16" height="15" viewBox="0 0 16 15" role="img" aria-label="✅"><g transform="translate(0.60 0.00) scale(1.0000 1.0000) translate(-0.00 -0.00)"><rect x=".45" y=".45" width="13.9" height="13.5" rx=".8" fill="#16b810" stroke="#0a0d0a" stroke-width=".9"/><path d="M3.2 7.6l2.7 2.6 5.7-6.4" fill="none" stroke="#f4fff4" stroke-width="1.55"/></g></svg><span class="t" style="left:228.70px;top:819px;color:#c6a500;letter-spacing:0.051px;">My simple note-taking setup - Zettelkasten in Obsidian</span><span class="t" style="left:572.80px;top:819px;letter-spacing:0.328px;">-</span><span class="t" style="left:582.30px;top:819px;color:#c6a500;letter-spacing:-0.279px;">Glasped</span><svg style="position:absolute;left:637px;top:822px" width="9" height="10" viewBox="0 0 9 10" ><g transform="translate(0.30 0.60) scale(0.9239 0.9239) translate(-0.00 -0.00)"><g fill="none" stroke="#c6a500" stroke-width="1.2" stroke-linecap="round" stroke-linejoin="round"><path d="M3.6 1.4H1.9a1 1 0 0 0-1 1v4.9a1 1 0 0 0 1 1h4.9a1 1 0 0 0 1-1V5.6"/><path d="M5.6 0.7H8.5V3.6"/><path d="M8.3 0.9L4.4 4.8"/></g></g></svg><span class="t" style="left:651.90px;top:819px;letter-spacing:-0.286px;">and</span></div>
<div class="ln"><span class="t" style="left:137.00px;top:842px;letter-spacing:0.057px;">added the literature notes.</span></div>
<div class="ln"><svg style="position:absolute;left:119px;top:865px" width="14" height="14" viewBox="0 0 14 14" ><g transform="translate(0.40 0.80) scale(1.0000 1.0000) translate(-0.00 -0.00)"><rect x=".5" y=".5" width="11.9" height="11.9" rx="2.4" fill="#26262b" stroke="#38383e" stroke-width="1"/></g></svg><span class="t" style="left:136.10px;top:865px;letter-spacing:-0.140px;">VideoLog::</span><span class="pill" style="left:206.30px;top:861.40px;width:137.70px"></span><span class="t" style="left:212.20px;top:867px;line-height:14px;color:#5f5f5f;font-size:12px;-webkit-text-stroke:.12px;letter-spacing:0.305px;">#fleetingnote/watchlist</span><span class="t" style="left:348.40px;top:865px;color:#c6a500;letter-spacing:0.090px;">Understanding note-taking | Zettelkasten</span><svg style="position:absolute;left:608px;top:868px" width="10" height="10" viewBox="0 0 10 10" ><g transform="translate(0.70 0.60) scale(0.9239 0.9239) translate(-0.00 -0.00)"><g fill="none" stroke="#c6a500" stroke-width="1.2" stroke-linecap="round" stroke-linejoin="round"><path d="M3.6 1.4H1.9a1 1 0 0 0-1 1v4.9a1 1 0 0 0 1 1h4.9a1 1 0 0 0 1-1V5.6"/><path d="M5.6 0.7H8.5V3.6"/><path d="M8.3 0.9L4.4 4.8"/></g></g></svg><span class="t" style="left:619.10px;top:865px;letter-spacing:0.030px;">- Rewatch</span></div>
<div class="ln"><span class="t" style="left:137.00px;top:890px;letter-spacing:-0.043px;">and take notes.</span></div>
<div class="ln"><svg style="position:absolute;left:122px;top:918px" width="6" height="6" viewBox="0 0 6 6" ><g transform="translate(0.70 0.50) scale(1.0000 1.0000) translate(-0.00 -0.00)"><circle cx="2.3" cy="2.3" r="2.15" fill="#e6e6e6"/></g></svg><span class="t" style="left:136.80px;top:912px;letter-spacing:-0.110px;">VideoLog::</span><svg style="position:absolute;left:208px;top:913px" width="16" height="15" viewBox="0 0 16 15" role="img" aria-label="✅"><g transform="translate(0.40 0.00) scale(1.0000 1.0000) translate(-0.00 -0.00)"><rect x=".45" y=".45" width="13.9" height="13.5" rx=".8" fill="#16b810" stroke="#0a0d0a" stroke-width=".9"/><path d="M3.2 7.6l2.7 2.6 5.7-6.4" fill="none" stroke="#f4fff4" stroke-width="1.55"/></g></svg><span class="t" style="left:228.30px;top:912px;color:#c6a500;letter-spacing:-0.020px;">Zettelkasten Obsidian Tutorial (Simplest way)</span><svg style="position:absolute;left:513px;top:915px" width="9" height="10" viewBox="0 0 9 10" ><g transform="translate(0.10 0.60) scale(0.9239 0.9239) translate(-0.00 -0.00)"><g fill="none" stroke="#c6a500" stroke-width="1.2" stroke-linecap="round" stroke-linejoin="round"><path d="M3.6 1.4H1.9a1 1 0 0 0-1 1v4.9a1 1 0 0 0 1 1h4.9a1 1 0 0 0 1-1V5.6"/><path d="M5.6 0.7H8.5V3.6"/><path d="M8.3 0.9L4.4 4.8"/></g></g></svg><span class="t" style="left:527.30px;top:912px;letter-spacing:0.428px;">-</span><span class="t" style="left:536.90px;top:912px;color:#c6a500;letter-spacing:-0.294px;">Glasped</span><svg style="position:absolute;left:592px;top:915px" width="9" height="10" viewBox="0 0 9 10" ><g transform="translate(0.10 0.60) scale(0.9239 0.9239) translate(-0.00 -0.00)"><g fill="none" stroke="#c6a500" stroke-width="1.2" stroke-linecap="round" stroke-linejoin="round"><path d="M3.6 1.4H1.9a1 1 0 0 0-1 1v4.9a1 1 0 0 0 1 1h4.9a1 1 0 0 0 1-1V5.6"/><path d="M5.6 0.7H8.5V3.6"/><path d="M8.3 0.9L4.4 4.8"/></g></g></svg><span class="t" style="left:606.60px;top:912px;letter-spacing:0.064px;">the higlights.</span></div>
<h3 class="ln"><svg style="position:absolute;left:88px;top:952px" width="9" height="6" viewBox="0 0 9 6" ><g transform="translate(0.80 0.10) scale(1.0000 1.0000) translate(-0.00 -0.00)"><path d="M1 1.2l3 3 3-3" fill="none" stroke="#5a5a60" stroke-width="1.3" stroke-linecap="round" stroke-linejoin="round"/></g></svg><span class="t" style="left:106.40px;top:943px;line-height:22px;color:#c49866;font-size:19.5px;font-weight:700;letter-spacing:-0.116px;">Workout Log</span></h3>
<i class="gd" style="left:124.80px;top:313.40px;height:42.40px"></i>
<i class="gd" style="left:124.80px;top:536.00px;height:88.70px"></i>
<i class="gd" style="left:124.80px;top:699.20px;height:19.70px"></i>
<i class="gd" style="left:124.80px;top:794.00px;height:21.00px"></i>
<i class="gd" style="left:124.80px;top:840.50px;height:20.50px"></i>
<i class="gd" style="left:124.80px;top:887.00px;height:21.00px"></i>
</div></div>
<i style="position:absolute;left:775px;top:65px;width:3.600px;height:660px;background:#37373c;border-radius:1px"></i>
<i style="position:absolute;left:779.300px;top:18px;width:1.600px;height:829px;background:#27272b"></i>
<div class="clip" style="left:781px;width:760px"><div class="in" style="left:-781px">
<div class="ln"><span class="t" style='left:859.80px;top:-66px;line-height:20px;font-family:"DejaVu Sans", sans-serif;font-size:17px;transform:scaleX(.8);transform-origin:0 0;'>←</span><span class="t" style="left:875.80px;top:-64px;color:#c6a500;letter-spacing:-0.084px;">Daily Notes Hub</span></div>
<h1 class="ln"><svg style="position:absolute;left:844px;top:-22px" width="9" height="7" viewBox="0 0 9 7" ><g transform="translate(0.30 0.90) scale(1.0000 1.0000) translate(-0.00 -0.00)"><path d="M1 1.2l3 3 3-3" fill="none" stroke="#5a5a60" stroke-width="1.3" stroke-linecap="round" stroke-linejoin="round"/></g></svg><span class="t" style="left:861.70px;top:-32px;line-height:27px;color:#969ddd;font-size:24px;font-weight:700;transform:scaleX(1.2015);transform-origin:0 0;">2022-01-04</span></h1>
<div class="ln"><span class="t" style="left:860.40px;top:12px;color:#c6a500;letter-spacing:0.678px;">2022-01-03</span><span class="t" style='left:943.90px;top:10px;line-height:20px;font-family:"DejaVu Sans", sans-serif;font-size:17px;transform:scaleX(.8);transform-origin:0 0;'>←</span><span class="t" style="left:960.20px;top:12px;letter-spacing:0.688px;">2022-01-04</span><span class="t" style='left:1043.40px;top:10px;line-height:20px;font-family:"DejaVu Sans", sans-serif;font-size:17px;transform:scaleX(.8);transform-origin:0 0;'>→</span><span class="t" style="left:1059.70px;top:12px;letter-spacing:-0.178px;">(none)</span></div>
<div class="ln"><svg style="position:absolute;left:878px;top:54px" width="5" height="6" viewBox="0 0 5 6" ><g transform="translate(0.20 0.50) scale(1.0000 1.0000) translate(-0.00 -0.00)"><circle cx="2.3" cy="2.3" r="2.15" fill="#e6e6e6"/></g></svg><span class="t" style="left:892.30px;top:48px;letter-spacing:-0.013px;">Summary:: Worked on a blog post today and watched some informative videos.</span></div>
<h2 class="ln"><svg style="position:absolute;left:844px;top:90px" width="9" height="6" viewBox="0 0 9 6" ><g transform="translate(0.30 0.10) scale(1.0000 1.0000) translate(-0.00 -0.00)"><path d="M1 1.2l3 3 3-3" fill="none" stroke="#5a5a60" stroke-width="1.3" stroke-linecap="round" stroke-linejoin="round"/></g></svg><svg style="position:absolute;left:863px;top:81px" width="19" height="24" viewBox="0 0 19 24" role="img" aria-label="💡"><g transform="translate(0.60 0.00) scale(1.0353 1.0348) translate(-0.00 -0.00)"><path d="M8.2 1.3a6.9 6.9 0 0 0-4 12.5c1 .9 1.4 1.9 1.5 3.2v3.2a1.4 1.4 0 0 0 1.4 1.4h2.2a1.4 1.4 0 0 0 1.4-1.4V17c.1-1.3.5-2.3 1.5-3.2a6.9 6.9 0 0 0-4-12.5z" fill="#ffd872" stroke="#000" stroke-width="1.3"/><path d="M6.3 12.3h3.8l-.5 4H6.8z" fill="#fdb800"/><rect x="5.9" y="16.4" width="4.7" height="4.6" rx="1" fill="#e9e9e9"/><rect x="5.9" y="18" width="4.7" height=".7" fill="#cfcfcf"/></g></svg><span class="t" style="left:888.10px;top:80px;line-height:25px;color:#c0779a;font-size:22px;font-weight:700;letter-spacing:-0.138px;">New Discoveries</span></h2>
<div class="ln"><svg style="position:absolute;left:878px;top:128px" width="5" height="6" viewBox="0 0 5 6" ><g transform="translate(0.20 0.50) scale(1.0000 1.0000) translate(-0.00 -0.00)"><circle cx="2.3" cy="2.3" r="2.15" fill="#e6e6e6"/></g></svg><span class="t" style="left:892.30px;top:122px;letter-spacing:0.032px;">NewDiscovery::</span><svg style="position:absolute;left:995px;top:122px" width="15" height="15" viewBox="0 0 15 15" role="img" aria-label="🎶"><g transform="translate(0.00 0.00) scale(1.0000 1.0000) translate(-0.00 -0.00)"><g stroke="#0b0b0d" stroke-width="1.4" stroke-linejoin="round" fill="#0b0b0d"><rect x="6.9" y="4" width="7" height="6.6"/><circle cx="8.1" cy="10.5" r="1.5"/><circle cx="12.5" cy="10.5" r="1.5"/></g><g fill="#8762cb"><rect x="2.7" y=".5" width="8.1" height="2.5"/><rect x="2.7" y=".5" width="1.5" height="10.5"/><circle cx="3" cy="10.9" r="2.9"/><rect x="6.9" y="4" width="7" height="2.1"/><rect x="6.9" y="4" width="1.2" height="6.3"/><rect x="12.7" y="4" width="1.2" height="6.3"/><circle cx="8.1" cy="10.5" r="1.5"/><circle cx="12.5" cy="10.5" r="1.5"/></g><circle cx="1.9" cy="5.5" r="1.6" fill="#b59bee"/></g></svg><span class="t" style="left:1014.40px;top:122px;">Mummy the Peepshow - Girlfriend</span></div>
<div class="ln"><svg style="position:absolute;left:878px;top:151px" width="5" height="6" viewBox="0 0 5 6" ><g transform="translate(0.20 0.50) scale(1.0000 1.0000) translate(-0.00 -0.00)"><circle cx="2.3" cy="2.3" r="2.15" fill="#e6e6e6"/></g></svg><span class="t" style="left:892.30px;top:145px;letter-spacing:0.032px;">NewDiscovery::</span><svg style="position:absolute;left:995px;top:145px" width="12" height="16" viewBox="0 0 12 16" role="img" aria-label="📘"><g transform="translate(0.20 0.80) scale(1.0000 1.0000) translate(-0.00 -0.00)"><rect x=".45" y=".5" width="9.7" height="13.2" rx="1.2" fill="#3a8fd0" stroke="#0a0a0c" stroke-width=".9"/><rect x="1.2" y="10.9" width="8.2" height="1.5" fill="#dfe9f2"/></g></svg><span class="t" style="left:1011.90px;top:145px;letter-spacing:-0.048px;">What Is Ancient Philosophy? by Pierre Hadot - Mentioned in a</span></div>
<div class="ln"><span class="t" style="left:892.30px;top:168px;letter-spacing:-0.035px;">comment on</span><span class="t" style="left:974.20px;top:168px;color:#c6a500;letter-spacing:0.006px;">Think Better with the Graph View + Live note-making session (in the</span></div>
<div class="ln"><span class="t" style="left:892.30px;top:190px;color:#c6a500;letter-spacing:-0.102px;">Obsidian app) - Full Version</span><svg style="position:absolute;left:1066px;top:193px" width="9" height="10" viewBox="0 0 9 10" ><g transform="translate(0.50 0.60) scale(0.9239 0.9239) translate(-0.00 -0.00)"><g fill="none" stroke="#c6a500" stroke-width="1.2" stroke-linecap="round" stroke-linejoin="round"><path d="M3.6 1.4H1.9a1 1 0 0 0-1 1v4.9a1 1 0 0 0 1 1h4.9a1 1 0 0 0 1-1V5.6"/><path d="M5.6 0.7H8.5V3.6"/><path d="M8.3 0.9L4.4 4.8"/></g></g></svg></div>
<h2 class="ln"><svg style="position:absolute;left:844px;top:233px" width="9" height="6" viewBox="0 0 9 6" ><g transform="translate(0.30 0.10) scale(1.0000 1.0000) translate(-0.00 -0.00)"><path d="M1 1.2l3 3 3-3" fill="none" stroke="#5a5a60" stroke-width="1.3" stroke-linecap="round" stroke-linejoin="round"/></g></svg><svg style="position:absolute;left:863px;top:223px" width="23" height="24" viewBox="0 0 23 24" role="img" aria-label="🚢"><g transform="translate(0.80 0.40) scale(1.0000 1.0000) translate(-0.00 -0.00)"><g stroke="#000" stroke-width="1.2" stroke-linejoin="round"><rect x="8.4" y="1.2" width="5" height="2.2" fill="#e2557a"/><path d="M4.5 3.6h13.2l.8 5.2H3.7z" fill="#fff"/><path d="M3.2 8.6h16.2l-2 10H5.2z" fill="#0a8fb8"/><rect x=".8" y="18.6" width="20.4" height="4" fill="#05c4ff"/></g><rect x="5" y="4.8" width="12.4" height="3.6" fill="#7fe9ff"/><rect x="6" y="8.9" width="10.4" height="2.2" fill="#f4f4f4"/><rect x="3.9" y="11.3" width="7.4" height="2" fill="#d1122f"/><rect x="11.3" y="11.3" width="7.4" height="2" fill="#e0522a"/><path d="M4.3 13.3h7v5.2H5.3z" fill="#0078a4"/><path d="M11.3 13.3h7l-1 5.2h-6z" fill="#0099c2"/><rect x="1.3" y="19.1" width="19.4" height="3" fill="#05c4ff"/></g></svg><span class="t" style="left:893.90px;top:223px;line-height:25px;color:#c0779a;font-size:22px;font-weight:700;letter-spacing:-0.636px;">Ship&#x27;s Log</span></h2>
<h3 class="ln"><svg style="position:absolute;left:844px;top:268px" width="9" height="6" viewBox="0 0 9 6" ><g transform="translate(0.30 0.10) scale(1.0000 1.0000) translate(-0.00 -0.00)"><path d="M1 1.2l3 3 3-3" fill="none" stroke="#5a5a60" stroke-width="1.3" stroke-linecap="round" stroke-linejoin="round"/></g></svg><span class="t" style="left:861.70px;top:259px;line-height:22px;color:#c49866;font-size:19.5px;font-weight:700;letter-spacing:-0.178px;">Tasks Log</span></h3>
<h3 class="ln"><svg style="position:absolute;left:844px;top:303px" width="9" height="6" viewBox="0 0 9 6" ><g transform="translate(0.30 0.10) scale(1.0000 1.0000) translate(-0.00 -0.00)"><path d="M1 1.2l3 3 3-3" fill="none" stroke="#5a5a60" stroke-width="1.3" stroke-linecap="round" stroke-linejoin="round"/></g></svg><span class="t" style="left:861.70px;top:294px;line-height:22px;color:#c49866;font-size:19.5px;font-weight:700;letter-spacing:0.091px;">Happenings</span></h3>
<h3 class="ln"><svg style="position:absolute;left:844px;top:337px" width="9" height="6" viewBox="0 0 9 6" ><g transform="translate(0.30 0.10) scale(1.0000 1.0000) translate(-0.00 -0.00)"><path d="M1 1.2l3 3 3-3" fill="none" stroke="#5a5a60" stroke-width="1.3" stroke-linecap="round" stroke-linejoin="round"/></g></svg><span class="t" style="left:861.70px;top:328px;line-height:22px;color:#c49866;font-size:19.5px;font-weight:700;letter-spacing:-0.138px;">Personal Projects Log</span></h3>
<div class="ln"><svg style="position:absolute;left:878px;top:374px" width="5" height="6" viewBox="0 0 5 6" ><g transform="translate(0.20 0.50) scale(1.0000 1.0000) translate(-0.00 -0.00)"><circle cx="2.3" cy="2.3" r="2.15" fill="#e6e6e6"/></g></svg><span class="t" style="left:892.30px;top:368px;letter-spacing:-0.167px;">PersonalProjects::</span><svg style="position:absolute;left:1009px;top:369px" width="15" height="15" viewBox="0 0 15 15" role="img" aria-label="🛠"><g transform="translate(0.50 0.20) scale(1.0000 1.0000) translate(-0.00 -0.00)"><g stroke-linecap="round"><path d="M2.2 11.8L11.2 3" stroke="#000" stroke-width="3.6"/><path d="M3.6 3.6L12.2 12.2" stroke="#000" stroke-width="3.6"/><path d="M1.2 5.2L5.6 1.4" stroke="#000" stroke-width="3.6"/><path d="M2.2 11.8L11.2 3" stroke="#e8e8e8" stroke-width="2"/><path d="M1.6 11.2l1.6 1.6M10.6 2.2l1.8 1.8" stroke="#e8e8e8" stroke-width="1.6"/><path d="M4 4L12.2 12.2" stroke="#e8a200" stroke-width="2"/><path d="M1.4 5L5.6 1.6" stroke="#d9d9d9" stroke-width="2.2"/></g></g></svg><span class="t" style="left:1029.10px;top:368px;color:#c6a500;letter-spacing:-0.100px;">How I Use the Daily Notes Plugin</span><span class="t" style="left:1236.30px;top:368px;letter-spacing:0.076px;">- Moved to refine status!</span></div>
<div class="ln"><span class="t" style="left:892.70px;top:391px;letter-spacing:0.328px;">-</span><svg style="position:absolute;left:903px;top:392px" width="16" height="15" viewBox="0 0 16 15" role="img" aria-label="✅"><g transform="translate(0.70 0.00) scale(1.0000 1.0000) translate(-0.00 -0.00)"><rect x=".45" y=".45" width="13.9" height="13.5" rx=".8" fill="#16b810" stroke="#0a0d0a" stroke-width=".9"/><path d="M3.2 7.6l2.7 2.6 5.7-6.4" fill="none" stroke="#f4fff4" stroke-width="1.55"/></g></svg><span class="t" style="left:923.90px;top:391px;letter-spacing:0.031px;">Create steps to download from Github</span></div>
<div class="ln"><span class="t" style="left:892.70px;top:414px;letter-spacing:0.328px;">-</span><span class="t" style="left:902.10px;top:414px;letter-spacing:0.041px;">Add screenshots of this vault</span></div>
<div class="ln"><span class="t" style="left:892.70px;top:437px;letter-spacing:0.328px;">-</span><svg style="position:absolute;left:903px;top:438px" width="16" height="15" viewBox="0 0 16 15" role="img" aria-label="✅"><g transform="translate(0.70 0.00) scale(1.0000 1.0000) translate(-0.00 -0.00)"><rect x=".45" y=".45" width="13.9" height="13.5" rx=".8" fill="#16b810" stroke="#0a0d0a" stroke-width=".9"/><path d="M3.2 7.6l2.7 2.6 5.7-6.4" fill="none" stroke="#f4fff4" stroke-width="1.55"/></g></svg><span class="t" style="left:923.90px;top:437px;letter-spacing:-0.274px;">Add</span><span class="t" style="left:952.60px;top:437px;color:#c6a500;letter-spacing:-0.018px;">Github page</span><svg style="position:absolute;left:1032px;top:440px" width="10" height="10" viewBox="0 0 10 10" ><g transform="translate(0.90 0.60) scale(0.9239 0.9239) translate(-0.00 -0.00)"><g fill="none" stroke="#c6a500" stroke-width="1.2" stroke-linecap="round" stroke-linejoin="round"><path d="M3.6 1.4H1.9a1 1 0 0 0-1 1v4.9a1 1 0 0 0 1 1h4.9a1 1 0 0 0 1-1V5.6"/><path d="M5.6 0.7H8.5V3.6"/><path d="M8.3 0.9L4.4 4.8"/></g></g></svg></div>
<div class="ln"><span class="t" style="left:892.70px;top:459px;letter-spacing:0.328px;">-</span><svg style="position:absolute;left:903px;top:460px" width="16" height="15" viewBox="0 0 16 15" role="img" aria-label="✅"><g transform="translate(0.70 0.00) scale(1.0000 1.0000) translate(-0.00 -0.00)"><rect x=".45" y=".45" width="13.9" height="13.5" rx=".8" fill="#16b810" stroke="#0a0d0a" stroke-width=".9"/><path d="M3.2 7.6l2.7 2.6 5.7-6.4" fill="none" stroke="#f4fff4" stroke-width="1.55"/></g></svg><span class="t" style="left:923.90px;top:459px;">Update description of Github page and create a release.</span></div>
<h3 class="ln"><svg style="position:absolute;left:844px;top:500px" width="9" height="6" viewBox="0 0 9 6" ><g transform="translate(0.30 0.10) scale(1.0000 1.0000) translate(-0.00 -0.00)"><path d="M1 1.2l3 3 3-3" fill="none" stroke="#5a5a60" stroke-width="1.3" stroke-linecap="round" stroke-linejoin="round"/></g></svg><span class="t" style="left:861.70px;top:491px;line-height:22px;color:#c49866;font-size:19.5px;font-weight:700;letter-spacing:-0.334px;">Reading Log</span></h3>
<div class="ln"><svg style="position:absolute;left:878px;top:537px" width="5" height="6" viewBox="0 0 5 6" ><g transform="translate(0.20 0.50) scale(1.0000 1.0000) translate(-0.00 -0.00)"><circle cx="2.3" cy="2.3" r="2.15" fill="#e6e6e6"/></g></svg><span class="t" style="left:892.30px;top:531px;letter-spacing:-0.275px;">ReadingLog::</span><svg style="position:absolute;left:979px;top:533px" width="15" height="14" viewBox="0 0 15 14" role="img" aria-label="✍"><g transform="translate(0.10 0.90) scale(1.0000 1.0000) translate(-0.00 -0.00)"><path d="M.9 11.2C1.3 9.2 2.6 6.4 4.4 4.6C5.4 3.7 6.9 3.2 7.9 3.4C8.9 3.6 9.5 4.2 10 4.9L11.5 6.7C12 7.1 12.8 7.3 13.8 7.4V12.3H1.5z" fill="#f4bd31" stroke="#0a0a0c" stroke-width=".8" stroke-linejoin="round"/><path d="M.7 11.7L10.3 1.8" stroke="#e5431a" stroke-width="1.35"/><path d="M9.7 2.4l.9-.9" stroke="#d8d8d8" stroke-width="1.35"/></g></svg><span class="t" style="left:998.50px;top:531px;color:#c6a500;letter-spacing:-0.043px;">De-Automating My Reading Notes: A New and Better Way For Capturing</span></div>
<div class="ln"><span class="t" style="left:892.30px;top:554px;color:#c6a500;letter-spacing:-0.118px;">My Reading Notes in Obsidian</span><svg style="position:absolute;left:1082px;top:557px" width="10" height="10" viewBox="0 0 10 10" ><g transform="translate(0.70 0.60) scale(0.9239 0.9239) translate(-0.00 -0.00)"><g fill="none" stroke="#c6a500" stroke-width="1.2" stroke-linecap="round" stroke-linejoin="round"><path d="M3.6 1.4H1.9a1 1 0 0 0-1 1v4.9a1 1 0 0 0 1 1h4.9a1 1 0 0 0 1-1V5.6"/><path d="M5.6 0.7H8.5V3.6"/><path d="M8.3 0.9L4.4 4.8"/></g></g></svg><span class="t" style="left:1093.80px;top:554px;letter-spacing:0.328px;">-</span><span class="t" style="left:1103.00px;top:554px;color:#c6a500;letter-spacing:-0.251px;">Glasped</span><svg style="position:absolute;left:1157px;top:557px" width="9" height="10" viewBox="0 0 9 10" ><g transform="translate(0.30 0.60) scale(0.9239 0.9239) translate(-0.00 -0.00)"><g fill="none" stroke="#c6a500" stroke-width="1.2" stroke-linecap="round" stroke-linejoin="round"><path d="M3.6 1.4H1.9a1 1 0 0 0-1 1v4.9a1 1 0 0 0 1 1h4.9a1 1 0 0 0 1-1V5.6"/><path d="M5.6 0.7H8.5V3.6"/><path d="M8.3 0.9L4.4 4.8"/></g></g></svg><span class="t" style="left:1172.20px;top:554px;letter-spacing:0.060px;">the highlights.</span></div>
<h3 class="ln"><svg style="position:absolute;left:844px;top:595px" width="9" height="6" viewBox="0 0 9 6" ><g transform="translate(0.30 0.10) scale(1.0000 1.0000) translate(-0.00 -0.00)"><path d="M1 1.2l3 3 3-3" fill="none" stroke="#5a5a60" stroke-width="1.3" stroke-linecap="round" stroke-linejoin="round"/></g></svg><span class="t" style="left:861.70px;top:586px;line-height:22px;color:#c49866;font-size:19.5px;font-weight:700;letter-spacing:-0.056px;">Video Log</span></h3>
<div class="ln"><svg style="position:absolute;left:874px;top:625px" width="14" height="14" viewBox="0 0 14 14" ><g transform="translate(0.80 0.80) scale(1.0000 1.0000) translate(-0.00 -0.00)"><rect x=".5" y=".5" width="11.9" height="11.9" rx="2.4" fill="#26262b" stroke="#38383e" stroke-width="1"/></g></svg><span class="t" style="left:891.40px;top:625px;letter-spacing:-0.110px;">VideoLog::</span><svg style="position:absolute;left:963px;top:627px" width="15" height="14" viewBox="0 0 15 14" role="img" aria-label="✍"><g transform="translate(0.00 0.90) scale(1.0000 1.0000) translate(-0.00 -0.00)"><path d="M.9 11.2C1.3 9.2 2.6 6.4 4.4 4.6C5.4 3.7 6.9 3.2 7.9 3.4C8.9 3.6 9.5 4.2 10 4.9L11.5 6.7C12 7.1 12.8 7.3 13.8 7.4V12.3H1.5z" fill="#f4bd31" stroke="#0a0a0c" stroke-width=".8" stroke-linejoin="round"/><path d="M.7 11.7L10.3 1.8" stroke="#e5431a" stroke-width="1.35"/><path d="M9.7 2.4l.9-.9" stroke="#d8d8d8" stroke-width="1.35"/></g></svg><span class="pill" style="left:982.50px;top:621.40px;width:172.00px"></span><span class="t" style="left:989.80px;top:627px;line-height:14px;color:#5f5f5f;font-size:12px;-webkit-text-stroke:.12px;letter-spacing:-0.388px;">#</span><svg style="position:absolute;left:997px;top:627px" width="5" height="14" viewBox="0 0 5 14" role="img" aria-label="❗"><g transform="translate(0.30 0.00) scale(1.0000 1.0000) translate(-0.00 -0.00)"><path d="M.9 1h2.8l-.5 8H1.4z" fill="#e8400f" stroke="#111" stroke-width=".6"/><circle cx="2.3" cy="11.3" r="1.3" fill="#e8400f" stroke="#111" stroke-width=".6"/></g></svg><span class="t" style="left:1003.80px;top:627px;line-height:14px;color:#5f5f5f;font-size:12px;-webkit-text-stroke:.12px;letter-spacing:0.126px;">RemindMe/Interestingstuff</span><span class="t" style="left:1158.30px;top:625px;color:#c6a500;">Breadcrumbs - Everything you need to know</span><svg style="position:absolute;left:1438px;top:628px" width="10" height="10" viewBox="0 0 10 10" ><g transform="translate(0.90 0.60) scale(0.9239 0.9239) translate(-0.00 -0.00)"><g fill="none" stroke="#c6a500" stroke-width="1.2" stroke-linecap="round" stroke-linejoin="round"><path d="M3.6 1.4H1.9a1 1 0 0 0-1 1v4.9a1 1 0 0 0 1 1h4.9a1 1 0 0 0 1-1V5.6"/><path d="M5.6 0.7H8.5V3.6"/><path d="M8.3 0.9L4.4 4.8"/></g></g></svg></div>
<div class="ln"><span class="t" style="left:892.70px;top:650px;letter-spacing:0.328px;">-</span><span class="t" style="left:902.10px;top:650px;letter-spacing:0.047px;">Add notes after watching. inline fields not yaml</span></div>
<div class="ln"><svg style="position:absolute;left:878px;top:679px" width="5" height="6" viewBox="0 0 5 6" ><g transform="translate(0.20 0.50) scale(1.0000 1.0000) translate(-0.00 -0.00)"><circle cx="2.3" cy="2.3" r="2.15" fill="#e6e6e6"/></g></svg><span class="t" style="left:892.30px;top:673px;letter-spacing:-0.110px;">VideoLog::</span><svg style="position:absolute;left:964px;top:674px" width="15" height="15" viewBox="0 0 15 15" role="img" aria-label="✅"><g transform="translate(0.10 0.00) scale(1.0000 1.0000) translate(-0.00 -0.00)"><rect x=".45" y=".45" width="13.9" height="13.5" rx=".8" fill="#16b810" stroke="#0a0d0a" stroke-width=".9"/><path d="M3.2 7.6l2.7 2.6 5.7-6.4" fill="none" stroke="#f4fff4" stroke-width="1.55"/></g></svg><span class="t" style="left:984.20px;top:673px;color:#c6a500;letter-spacing:0.051px;">My simple note-taking setup - Zettelkasten in Obsidian</span><span class="t" style="left:1328.30px;top:673px;letter-spacing:0.328px;">-</span><span class="t" style="left:1337.80px;top:673px;color:#c6a500;letter-spacing:-0.279px;">Glasped</span><svg style="position:absolute;left:1392px;top:676px" width="10" height="10" viewBox="0 0 10 10" ><g transform="translate(0.80 0.60) scale(0.9239 0.9239) translate(-0.00 -0.00)"><g fill="none" stroke="#c6a500" stroke-width="1.2" stroke-linecap="round" stroke-linejoin="round"><path d="M3.6 1.4H1.9a1 1 0 0 0-1 1v4.9a1 1 0 0 0 1 1h4.9a1 1 0 0 0 1-1V5.6"/><path d="M5.6 0.7H8.5V3.6"/><path d="M8.3 0.9L4.4 4.8"/></g></g></svg><span class="t" style="left:1407.40px;top:673px;letter-spacing:-0.286px;">and</span></div>
<div class="ln"><span class="t" style="left:892.50px;top:696px;letter-spacing:0.057px;">added the literature notes.</span></div>
<div class="ln"><svg style="position:absolute;left:874px;top:719px" width="14" height="14" viewBox="0 0 14 14" ><g transform="translate(0.90 0.80) scale(1.0000 1.0000) translate(-0.00 -0.00)"><rect x=".5" y=".5" width="11.9" height="11.9" rx="2.4" fill="#26262b" stroke="#38383e" stroke-width="1"/></g></svg><span class="t" style="left:891.60px;top:719px;letter-spacing:-0.140px;">VideoLog::</span><span class="pill" style="left:961.80px;top:715.40px;width:137.70px"></span><span class="t" style="left:967.70px;top:721px;line-height:14px;color:#5f5f5f;font-size:12px;-webkit-text-stroke:.12px;letter-spacing:0.305px;">#fleetingnote/watchlist</span><span class="t" style="left:1103.90px;top:719px;color:#c6a500;letter-spacing:0.090px;">Understanding note-taking | Zettelkasten</span><svg style="position:absolute;left:1364px;top:722px" width="9" height="10" viewBox="0 0 9 10" ><g transform="translate(0.20 0.60) scale(0.9239 0.9239) translate(-0.00 -0.00)"><g fill="none" stroke="#c6a500" stroke-width="1.2" stroke-linecap="round" stroke-linejoin="round"><path d="M3.6 1.4H1.9a1 1 0 0 0-1 1v4.9a1 1 0 0 0 1 1h4.9a1 1 0 0 0 1-1V5.6"/><path d="M5.6 0.7H8.5V3.6"/><path d="M8.3 0.9L4.4 4.8"/></g></g></svg><span class="t" style="left:1374.60px;top:719px;letter-spacing:0.030px;">- Rewatch</span></div>
<div class="ln"><span class="t" style="left:892.50px;top:744px;letter-spacing:-0.043px;">and take notes.</span></div>
<div class="ln"><svg style="position:absolute;left:878px;top:772px" width="5" height="6" viewBox="0 0 5 6" ><g transform="translate(0.20 0.50) scale(1.0000 1.0000) translate(-0.00 -0.00)"><circle cx="2.3" cy="2.3" r="2.15" fill="#e6e6e6"/></g></svg><span class="t" style="left:892.30px;top:766px;letter-spacing:-0.110px;">VideoLog::</span><svg style="position:absolute;left:963px;top:767px" width="16" height="15" viewBox="0 0 16 15" role="img" aria-label="✅"><g transform="translate(0.90 0.00) scale(1.0000 1.0000) translate(-0.00 -0.00)"><rect x=".45" y=".45" width="13.9" height="13.5" rx=".8" fill="#16b810" stroke="#0a0d0a" stroke-width=".9"/><path d="M3.2 7.6l2.7 2.6 5.7-6.4" fill="none" stroke="#f4fff4" stroke-width="1.55"/></g></svg><span class="t" style="left:983.80px;top:766px;color:#c6a500;letter-spacing:-0.020px;">Zettelkasten Obsidian Tutorial (Simplest way)</span><svg style="position:absolute;left:1268px;top:769px" width="10" height="10" viewBox="0 0 10 10" ><g transform="translate(0.60 0.60) scale(0.9239 0.9239) translate(-0.00 -0.00)"><g fill="none" stroke="#c6a500" stroke-width="1.2" stroke-linecap="round" stroke-linejoin="round"><path d="M3.6 1.4H1.9a1 1 0 0 0-1 1v4.9a1 1 0 0 0 1 1h4.9a1 1 0 0 0 1-1V5.6"/><path d="M5.6 0.7H8.5V3.6"/><path d="M8.3 0.9L4.4 4.8"/></g></g></svg><span class="t" style="left:1282.80px;top:766px;letter-spacing:0.428px;">-</span><span class="t" style="left:1292.40px;top:766px;color:#c6a500;letter-spacing:-0.294px;">Glasped</span><svg style="position:absolute;left:1347px;top:769px" width="10" height="10" viewBox="0 0 10 10" ><g transform="translate(0.60 0.60) scale(0.9239 0.9239) translate(-0.00 -0.00)"><g fill="none" stroke="#c6a500" stroke-width="1.2" stroke-linecap="round" stroke-linejoin="round"><path d="M3.6 1.4H1.9a1 1 0 0 0-1 1v4.9a1 1 0 0 0 1 1h4.9a1 1 0 0 0 1-1V5.6"/><path d="M5.6 0.7H8.5V3.6"/><path d="M8.3 0.9L4.4 4.8"/></g></g></svg><span class="t" style="left:1362.10px;top:766px;letter-spacing:0.064px;">the higlights.</span></div>
<h3 class="ln"><svg style="position:absolute;left:844px;top:806px" width="9" height="6" viewBox="0 0 9 6" ><g transform="translate(0.30 0.10) scale(1.0000 1.0000) translate(-0.00 -0.00)"><path d="M1 1.2l3 3 3-3" fill="none" stroke="#5a5a60" stroke-width="1.3" stroke-linecap="round" stroke-linejoin="round"/></g></svg><span class="t" style="left:861.90px;top:797px;line-height:22px;color:#c49866;font-size:19.5px;font-weight:700;letter-spacing:-0.116px;">Workout Log</span></h3>
<i class="gd" style="left:880.30px;top:167.40px;height:42.40px"></i>
<i class="gd" style="left:880.30px;top:390.00px;height:88.70px"></i>
<i class="gd" style="left:880.30px;top:553.20px;height:19.70px"></i>
<i class="gd" style="left:880.30px;top:648.00px;height:21.00px"></i>
<i class="gd" style="left:880.30px;top:694.50px;height:20.50px"></i>
<i class="gd" style="left:880.30px;top:741.00px;height:21.00px"></i>
</div></div>
<i style="position:absolute;left:1530.900px;top:187px;width:3.500px;height:640px;background:#37373c;border-radius:1px"></i>
<svg style="position:absolute;left:1549px;top:35px" width="7" height="9" viewBox="0 0 7 9" fill="none" stroke="#616167" stroke-width="1.400" stroke-linecap="round" stroke-linejoin="round"><path d="M5.300 1L1.700 4.200l3.600 3.200"/></svg>
<div id="status"><span style="left:20.40px;letter-spacing:-0.000px;">1 backlink</span><span style="left:73.20px;letter-spacing:0.227px;">436 words</span><span style="left:132.80px;letter-spacing:0.200px;">3051 characters</span><span style="left:217.00px;letter-spacing:-0.622px;border-bottom:1px dotted #8a8a8e;line-height:11px;">Aa</span></div>
</body></html>
